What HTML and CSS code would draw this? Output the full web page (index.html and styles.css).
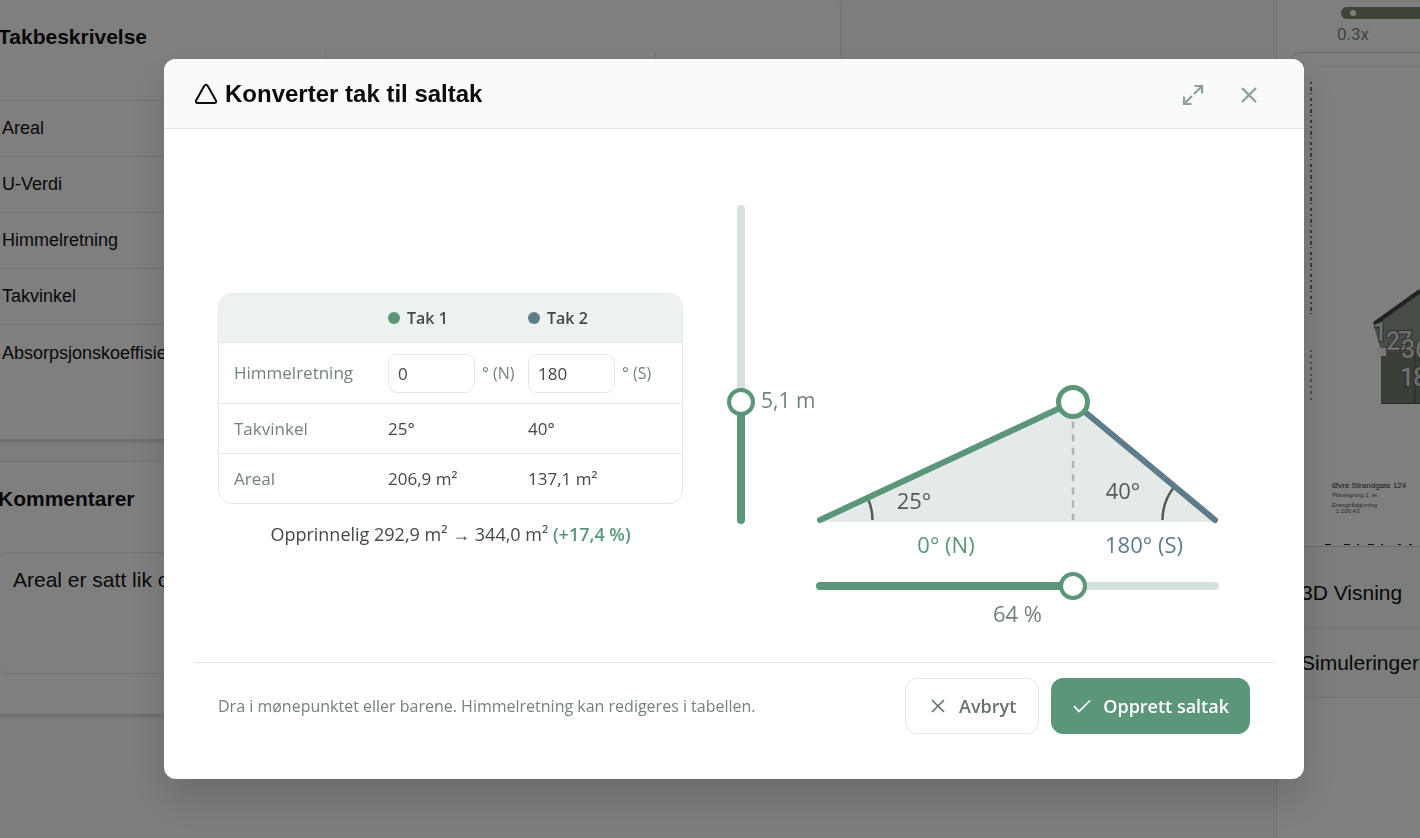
FILE: index.html
```html
<!DOCTYPE html>
<html lang="nb">
<head>
<meta charset="utf-8">
<title>Konverter tak til saltak</title>
<link rel="stylesheet" href="styles.css">
</head>
<body>
<div class="page">
  <main class="content">
    <section class="card card-first">
      <h2 class="card-title">Takbeskrivelse</h2>
      <div class="prop-head"><span></span><span></span><span></span></div>
      <div class="prop">Areal</div>
      <div class="prop">U-Verdi</div>
      <div class="prop">Himmelretning</div>
      <div class="prop">Takvinkel</div>
      <div class="prop">Absorpsjonskoeffisient</div>
    </section>
    <section class="card card-comments">
      <h2 class="card-title">Kommentarer</h2>
      <textarea class="comment" aria-label="Kommentarer">Areal er satt lik opprinnelig areal</textarea>
    </section>
  </main>
  <aside class="side">
    <div class="zoom-area">
      <div class="zoom-bar"><span class="zoom-knob"></span></div>
      <span class="zoom-label">0.3x</span>
    </div>
    <div class="viewer">
      <svg class="plan" width="130" height="493" viewBox="1290 53 130 493" aria-hidden="true">
        <path d="M1318 66.500H1420" stroke="#eceeed"/>
        <path d="M1311 82V316" stroke="#777" stroke-width="2" stroke-dasharray="2 3 4 2 1 4 3 3"/>
        <path d="M1311 350V400" stroke="#999" stroke-width="2" stroke-dasharray="2 3 3 4"/>
        <path d="M1375 323 1420 292V404H1381V350L1375 330Z" fill="#8e9a8c"/>
        <path d="M1381 352H1420V404H1381Z" fill="#727d6c"/>
        <path d="M1374 324 1420 291" stroke="#454545" stroke-width="4"/>
        <path d="M1381 403.500H1420M1415 352V404" stroke="#4c5249"/>
        <path d="M1374 348h12v8h-7z" fill="#f4f4f4"/>
        <g class="plan-number"><text x="1373" y="341">1</text><text x="1386" y="350">2</text><text x="1398" y="350">7</text><text x="1401" y="358">3</text><text x="1415" y="358">6</text><text x="1400" y="386">1</text><text x="1413" y="386">8</text></g>
        <text class="plan-title" x="1332" y="488">Øvre Strandgate 124</text>
        <text class="plan-note" x="1332" y="497">Plantegning 1. et</text>
        <text class="plan-note" x="1332" y="507">Energirådgivning</text>
        <text class="plan-note" x="1336" y="513">1:100 A3</text>
        <path d="M1325 544.500h6M1344 544.500h6M1357 544.500h2M1368 544.500h6M1381 544.500h2M1398 544.500h3M1409 544.500h3" stroke="#222"/>
      </svg>
    </div>
    <div class="side-gap"></div>
    <a class="side-link" href="#visning">3D Visning</a>
    <a class="side-link" href="#simuleringer">Simuleringer</a>
  </aside>
</div>

<div class="overlay">
  <div class="modal" role="dialog" aria-modal="true" aria-labelledby="modal-title">
    <header class="modal-head">
      <svg width="24" height="24" viewBox="0 0 24 24" fill="none" stroke="#0a0c0b" stroke-width="2" stroke-linejoin="round" aria-hidden="true"><path d="M10.200 4 2.200 18.200Q1.200 21 3.600 21H20.400Q22.800 21 21.800 18.200L13.800 4Q12 1.600 10.200 4Z"/></svg>
      <h1 class="modal-title" id="modal-title">Konverter tak til saltak</h1>
      <button class="icon-btn" type="button" aria-label="Utvid">
        <svg width="24" height="24" viewBox="0 0 24 24" fill="none" stroke="#8aa097" stroke-width="2.200" aria-hidden="true"><path d="M13.500 4H21V11.500M21 4 13 12M3 14.500V22H10.500M3 22 11 14"/></svg>
      </button>
      <button class="icon-btn" type="button" aria-label="Lukk">
        <svg width="24" height="24" viewBox="0 0 24 24" fill="none" stroke="#8aa097" stroke-width="2.200" aria-hidden="true"><path d="M5 6 19 20M19 6 5 20"/></svg>
      </button>
    </header>

    <div class="modal-body">
      <div class="summary">
        <div class="table-frame">
          <table class="roofs">
            <colgroup><col class="col-label"><col class="col-one"><col></colgroup>
            <thead>
              <tr><td></td><th scope="col"><span class="roof-name"><i class="dot dot-green"></i>Tak 1</span></th><th scope="col"><span class="roof-name"><i class="dot dot-blue"></i>Tak 2</span></th></tr>
            </thead>
            <tbody>
              <tr class="row-dir"><th scope="row">Himmelretning</th>
                <td><label class="deg"><input type="text" value="0" aria-label="Himmelretning tak 1"><span>° (N)</span></label></td>
                <td><label class="deg"><input type="text" value="180" aria-label="Himmelretning tak 2"><span>° (S)</span></label></td></tr>
              <tr><th scope="row">Takvinkel</th><td>25°</td><td>40°</td></tr>
              <tr><th scope="row">Areal</th><td>206,9 m²</td><td>137,1 m²</td></tr>
            </tbody>
          </table>
        </div>
        <p class="total">Opprinnelig 292,9 m² → 344,0 m² <strong>(+17,4 %)</strong></p>
      </div>

      <div class="chart">
        <div class="slider slider-v">
          <span class="track"></span>
          <input type="range" min="0" max="1000" value="379" aria-label="Mønehøyde">
        </div>
        <svg class="roof" viewBox="755 195 474 366" role="img" aria-label="Saltak, 25° og 40°">
          <path d="M820 520 1073 402 1216 520V522H820Z" fill="#e4eae8"/>
          <path d="M1073 402V520" stroke="#a9b7b2" stroke-width="2.500" stroke-dasharray="7 6.200" stroke-dashoffset="7"/>
          <path d="M872.500 520A53 53 0 0 0 867.500 497.800M1162.500 520A53 53 0 0 1 1174.500 486.500" fill="none" stroke="#545b56" stroke-width="2.500"/>
          <path d="M820 520 1073 402" stroke="#5b9679" stroke-width="6" stroke-linecap="round"/>
          <path d="M1215 520 1073 402" stroke="#5f7c8a" stroke-width="6" stroke-linecap="round"/>
          <circle cx="1073" cy="402" r="14.500" fill="#fff" stroke="#5b9679" stroke-width="5"/>
          <text class="t-height" x="761" y="408">5,1 m</text>
          <text class="t-angle" x="914" y="509" text-anchor="middle">25°</text>
          <text class="t-angle" x="1123" y="499" text-anchor="middle">40°</text>
          <text class="t-green" x="946" y="553" text-anchor="middle">0° (N)</text>
          <text class="t-blue" x="1144" y="553" text-anchor="middle">180° (S)</text>
        </svg>
        <div class="ridge">
          <div class="slider slider-h">
            <span class="track"></span>
            <input type="range" id="ridge" min="0" max="100" value="64">
          </div>
          <label class="ridge-label" for="ridge">64 %</label>
        </div>
      </div>
    </div>

    <footer class="modal-foot">
      <p class="hint">Dra i mønepunktet eller barene. Himmelretning kan redigeres i tabellen.</p>
      <button class="btn btn-cancel" type="button">
        <svg width="20" height="20" viewBox="0 0 20 20" fill="none" stroke="currentColor" stroke-width="1.700" aria-hidden="true"><path d="M4 4 16 16M16 4 4 16"/></svg>
        Avbryt
      </button>
      <button class="btn btn-ok" type="button">
        <svg width="20" height="20" viewBox="0 0 20 20" fill="none" stroke="currentColor" stroke-width="1.700" aria-hidden="true"><path d="M2 10 7 15.500 18 4.500"/></svg>
        Opprett saltak
      </button>
    </footer>
  </div>
</div>
</body>
</html>
```
FILE: styles.css
```css
* { box-sizing: border-box; }

body {
  margin: 0;
  min-height: 100vh;
  overflow: hidden;
  background: #f9fcfa;
  color: #111;
  font-family: "Liberation Sans", Arial, sans-serif;
}

h1, h2, p { margin: 0; }

/* Page behind the dialog */
.page { display: flex; justify-content: space-between; height: 100vh; }
.content { flex: 0 1 841px; min-width: 0; }

.card {
  margin-left: -33px;
  background: #fff;
  border: 1px solid #e6e9e8;
  border-bottom: 2px solid #d9dcdb;
  border-radius: 12px;
  box-shadow: 0 1px 3px rgba(0, 0, 0, 0.15);
}
.card-first { margin-top: -4px; padding-bottom: 58px; }
.card-comments { margin-top: 20px; padding-bottom: 40px; }
.card-title { padding: 28px 30px 0; font-size: 21px; line-height: 24px; }
.card-comments .card-title { padding-top: 25px; }

.prop-head { display: grid; grid-template-columns: 357px 330px 1fr; height: 48px; margin-top: 3px; }
.prop-head span + span { border-left: 1px solid #dfe3e1; }
.prop {
  height: 56px;
  padding-left: 34px;
  border-top: 1px solid #dfe3e1;
  font-size: 18px;
  line-height: 54px;
}
.prop:last-child { height: 57px; line-height: 56px; }
.comment {
  display: block;
  width: calc(100% - 56px);
  height: 122px;
  margin: 41px 28px 0;
  padding: 14px 16px;
  border: 1px solid #e2e6e4;
  border-radius: 12px;
  resize: none;
  font: 21px/26px "Liberation Sans", Arial, sans-serif;
  color: #111;
}

.side {
  display: flex;
  flex-direction: column;
  width: 144px;
  background: #fff;
  border-left: 1px solid #e2e8e5;
  overflow: hidden;
}
.zoom-area { height: 52px; padding: 7px 0 0 60px; }
.zoom-bar {
  width: 160px;
  height: 12px;
  margin-left: 4px;
  padding: 3px 9px;
  border-radius: 6px;
  background: #7e8872;
}
.zoom-knob { display: block; width: 6px; height: 6px; border-radius: 50%; background: #fff; }
.zoom-label { font: 17px/30px Roboto, sans-serif; color: #7e8c86; }
.viewer {
  width: 160px;
  height: 495px;
  margin-left: 12px;
  border: 1px solid #d4d8d6;
  border-radius: 12px 0 0 0;
}
.plan { display: block; }
.plan-number {
  font: 500 25px Roboto, sans-serif;
  fill: #dcdfda;
  stroke: #5a6158;
  stroke-width: 2px;
  paint-order: stroke;
}
.plan-title { font: 8px "Liberation Sans", sans-serif; fill: #333; }
.plan-note { font: 6px "Liberation Sans", sans-serif; fill: #555; }
.side-gap { height: 11px; background: #f9fcfa; }
.side-link {
  padding-left: 24px;
  border-bottom: 1px solid #dfe3e1;
  background: #f9fcfa;
  color: #111;
  font-size: 21px;
  line-height: 69px;
  white-space: nowrap;
  text-decoration: none;
}

/* Dialog */
.overlay {
  position: fixed;
  inset: 0;
  display: flex;
  padding: 59px 116px 59px 164px;
  background: rgba(0, 0, 0, 0.5);
}
.modal {
  flex: 1;
  display: flex;
  flex-direction: column;
  overflow: hidden;
  border-radius: 12px;
  background: #fff;
  box-shadow: 0 20px 40px rgba(0, 0, 0, 0.14);
  font-family: "Open Sans", "Noto Sans", sans-serif;
  color: #414a45;
}
.modal-head {
  display: flex;
  align-items: center;
  height: 70px;
  padding: 0 35px 0 30px;
  border-bottom: 1px solid #e0e8e5;
  background: #f9fafc;
}
.modal-title {
  flex: 1;
  padding-left: 7px;
  color: #0a0c0b;
  font: 700 24px/32px "Liberation Sans", Arial, sans-serif;
}
.icon-btn {
  display: grid;
  place-items: center;
  width: 40px;
  height: 40px;
  margin-left: 16px;
  padding: 0;
  border: 0;
  background: none;
}

.modal-body {
  flex: 1;
  display: grid;
  grid-template-columns: 465fr 523fr;
  gap: 44px;
  align-items: center;
  padding: 48px 54px 0;
}

.table-frame { overflow: hidden; border: 1px solid #e3e9e7; border-radius: 14px; }
.roofs {
  width: 100%;
  table-layout: fixed;
  border-collapse: separate;
  border-spacing: 0;
  font-size: 17px;
  line-height: 24px;
}
.col-label { width: 169px; }
.col-one { width: 140px; }
.roofs th, .roofs td { height: 50px; padding: 0; text-align: left; border-top: 1px solid #e3e9e7; }
.roofs thead th, .roofs thead td { height: 48px; border-top: 0; background: #edf1f0; }
.roofs thead th { font-weight: 600; font-size: 16px; }
.roofs tbody th { padding-left: 15px; font-weight: 400; color: #73827b; }
.roofs .row-dir th, .roofs .row-dir td { height: 61px; }
.roof-name { display: flex; align-items: center; gap: 7px; }
.dot { width: 12px; height: 12px; border-radius: 50%; }
.dot-green { background: #5b9679; }
.dot-blue { background: #5f7c8a; }
.deg { display: flex; align-items: center; gap: 7px; font-size: 16px; color: #73827b; white-space: nowrap; }
.deg input {
  width: 87px;
  height: 39px;
  padding: 0 9px;
  border: 1px solid #e3e9e7;
  border-radius: 9px;
  background: #fff;
  color: #414a45;
  font: 17px "Open Sans", "Noto Sans", sans-serif;
}
.total { margin-top: 18px; text-align: center; font-size: 18px; line-height: 24px; }
.total strong { font-weight: 600; color: #5b9679; }

.chart {
  display: grid;
  grid-template-columns: 28px 1fr;
  align-items: start;
  padding: 0 21px 18px 0;
}
.roof { display: block; width: 100%; font-size: 22px; }
.t-height { fill: #73827b; font-size: 21px; }
.t-angle { fill: #545b56; }
.t-green { fill: #5b9679; }
.t-blue { fill: #5f7c8a; }
.ridge { grid-column: 2; display: grid; margin-left: 51px; margin-top: 11px; }
.ridge-label { text-align: center; font-size: 22px; line-height: 26px; color: #73827b; }

/* Track and range input share one grid cell; the thumb overhangs the track ends */
.slider { display: grid; }
.slider .track, .slider input { grid-area: 1 / 1; }
.slider .track { border-radius: 4px; }
.slider-v .track {
  width: 8px;
  margin: 10px;
  background: linear-gradient(to top, #5b9679 38%, #d8e0dd 38%);
}
.slider-h .track {
  height: 8px;
  margin: 10px;
  background: linear-gradient(to right, #5b9679 64%, #d8e0dd 64%);
}
.slider input { appearance: none; margin: 0; background: none; }
.slider-h input { width: 100%; height: 28px; }
.slider-v input { width: 28px; height: 339px; writing-mode: vertical-lr; direction: rtl; }
.slider input::-webkit-slider-thumb {
  appearance: none;
  box-sizing: border-box;
  width: 28px;
  height: 28px;
  border: 4px solid #5b9679;
  border-radius: 50%;
  background: #fff;
}

.modal-foot {
  display: flex;
  align-items: center;
  gap: 12px;
  margin: 0 30px;
  padding: 15px 24px 45px;
  border-top: 1px solid #e0e8e5;
}
.hint { flex: 1; font-size: 16px; line-height: 24px; color: #73827b; }
.btn {
  display: flex;
  align-items: center;
  gap: 11px;
  height: 56px;
  padding: 0 22px;
  border: 1px solid #e3e9e7;
  border-radius: 12px;
  background: #fff;
  color: #66736d;
  font: 600 18px "Open Sans", "Noto Sans", sans-serif;
  white-space: nowrap;
}
.btn-ok { padding: 0 20px; border-color: #5b9679; background: #5b9679; color: #fff; }
```
